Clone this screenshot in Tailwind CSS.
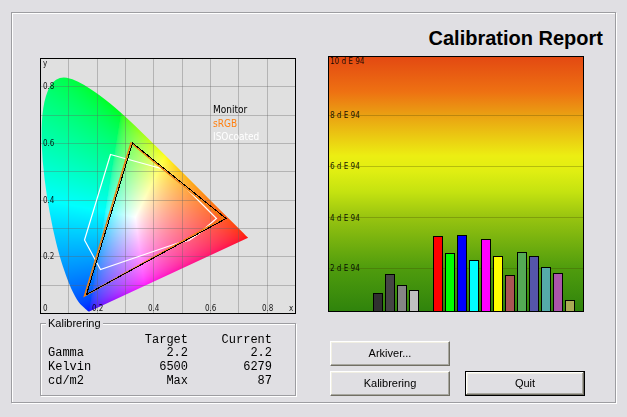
<!DOCTYPE html>
<html lang="da">
<head>
<meta charset="utf-8">
<meta name="viewport" content="width=device-width, initial-scale=1">
<title>Calibration Report</title>
<script src="https://cdn.jsdelivr.net/npm/@tailwindcss/browser@4"></script>
</head>
<body class="min-h-screen bg-[#e0dfe3] pt-3 pr-[11px] pb-3 pl-[11px] font-['Liberation_Sans',Arial,sans-serif] text-[11px] text-black">
<main class="border border-[#9d9da1] pt-3 pb-[6px] shadow-[1px_1px_0_#fff,inset_1px_1px_0_#fff]">
  <h1 class="pr-3 text-right text-[20px] leading-[26px] font-bold">Calibration Report</h1>
  <div class="mt-[5px] grid grid-cols-2 gap-8 pr-[31px] pl-7">
    <section class="pt-[2px]">
      <div class="grid bg-[#e0e0e0]">
        <canvas id="gamut" width="256" height="256" class="col-start-1 row-start-1 w-full"></canvas>
        <svg viewBox="0 0 256 256" class="col-start-1 row-start-1 w-full font-['DejaVu_Sans_Condensed','DejaVu_Sans',Tahoma,sans-serif]" role="img" aria-label="Chromaticity diagram">
          <g stroke="#606060" stroke-opacity=".35">
            <path d="M28.500 1V255M57.500 1V255M85.500 1V255M113.500 1V255M142.500 1V255M170.500 1V255M198.500 1V255M227.500 1V255"/>
            <path d="M1 28.500H255M1 57.500H255M1 85.500H255M1 113.500H255M1 142.500H255M1 170.500H255M1 198.500H255M1 227.500H255"/>
          </g>
          <g fill="none">
            <path stroke="#fff" stroke-width="1.200" d="M70.500 96.500L123 111L147 131L176.500 160.500L159 175.500L149 182.500L138 185L60.500 211.500L44.500 182Z"/>
            <path stroke="#f08010" stroke-width="1.500" d="M91 85L44.500 238L183 160.500Z"/>
            <path stroke="#000" stroke-width="1" shape-rendering="crispEdges" d="M92.500 85L46.500 236.500L186 160.500Z"/>
          </g>
          <g font-size="8" fill="#000" fill-opacity=".9">
            <text x="3" y="8">y</text><text x="3" y="31">0.8</text><text x="3" y="88">0.6</text><text x="3" y="145">0.4</text><text x="3" y="201">0.2</text>
            <text x="3" y="253">0</text><text x="52" y="253">0.2</text><text x="108" y="253">0.4</text><text x="165" y="253">0.6</text><text x="222" y="253">0.8</text><text x="249" y="253">x</text>
          </g>
          <g font-size="10">
            <text x="173" y="55">Monitor</text><text x="173" y="69" fill="#ff8010">sRGB</text><text x="173" y="82" fill="#fff">ISOcoated</text>
          </g>
          <rect x=".5" y=".5" width="255" height="255" fill="none" stroke="#000"/>
        </svg>
      </div>
      <fieldset class="mt-[2px] border border-[#9d9da1] px-[7px] pb-[7px] shadow-[1px_1px_0_#fff,inset_1px_1px_0_#fff]">
        <legend class="-ml-[2px] bg-[#e0dfe3] px-[2px] leading-[14px]">Kalibrering</legend>
        <table class="w-full table-fixed text-right font-['Liberation_Mono','Courier_New',monospace] text-[12px] leading-[14px]">
          <thead><tr><td class="w-[56px]"></td><th scope="col" class="pt-1 pr-2 leading-[12px] font-normal">Target</th><th scope="col" class="pt-1 pr-4 leading-[12px] font-normal">Current</th></tr></thead>
          <tbody>
            <tr><th scope="row" class="text-left font-normal">Gamma</th><td class="pr-2">2.2</td><td class="pr-4">2.2</td></tr>
            <tr><th scope="row" class="text-left font-normal">Kelvin</th><td class="pr-2">6500</td><td class="pr-4">6279</td></tr>
            <tr><th scope="row" class="text-left font-normal">cd/m2</th><td class="pr-2">Max</td><td class="pr-4">87</td></tr>
          </tbody>
        </table>
      </fieldset>
    </section>
    <section>
      <svg viewBox="0 0 256 256" class="block w-full font-['DejaVu_Sans_Condensed','DejaVu_Sans',Tahoma,sans-serif]" role="img" aria-label="Delta E 94 per patch">
        <defs><linearGradient id="scale" x1="0" y1="0" x2="0" y2="1">
          <stop offset="0" stop-color="#e34812"/><stop offset=".14" stop-color="#ee7112"/><stop offset=".23" stop-color="#eaa012"/><stop offset=".32" stop-color="#ebcc12"/><stop offset=".39" stop-color="#ecee12"/><stop offset=".45" stop-color="#e0ee12"/><stop offset=".53" stop-color="#c5e310"/><stop offset=".63" stop-color="#98c410"/><stop offset=".83" stop-color="#4f9c0d"/><stop offset="1" stop-color="#2f830c"/>
        </linearGradient></defs>
        <rect width="256" height="256" fill="url(#scale)"/>
        <path stroke="#404000" stroke-opacity=".28" d="M1 59.500H255M1 110.500H255M1 161.500H255M1 212.500H255"/>
        <g font-size="8" fill="#000" fill-opacity=".9">
          <text x="2" y="8">10 d E 94</text><text x="2" y="62">8 d E 94</text><text x="2" y="113">6 d E 94</text><text x="2" y="165">4 d E 94</text><text x="2" y="215">2 d E 94</text>
        </g>
        <g stroke="#000">
          <rect x="45.500" y="237.500" width="9" height="18" fill="#303030"/>
          <rect x="57.500" y="218.500" width="9" height="37" fill="#454545"/>
          <rect x="69.500" y="229.500" width="9" height="26" fill="#858585"/>
          <rect x="81.500" y="234.500" width="9" height="21" fill="#c0c0c0"/>
          <rect x="105.500" y="180.500" width="9" height="75" fill="#f00"/>
          <rect x="117.500" y="197.500" width="9" height="58" fill="#0f0"/>
          <rect x="129.500" y="179.500" width="9" height="76" fill="#00f"/>
          <rect x="141.500" y="204.500" width="9" height="51" fill="#0ff"/>
          <rect x="153.500" y="183.500" width="9" height="72" fill="#f0f"/>
          <rect x="165.500" y="200.500" width="9" height="55" fill="#ff0"/>
          <rect x="177.500" y="219.500" width="9" height="36" fill="#aa5555"/>
          <rect x="189.500" y="196.500" width="9" height="59" fill="#55aa55"/>
          <rect x="201.500" y="200.500" width="9" height="55" fill="#5555aa"/>
          <rect x="213.500" y="211.500" width="9" height="44" fill="#55aaaa"/>
          <rect x="225.500" y="217.500" width="9" height="38" fill="#aa55aa"/>
          <rect x="237.500" y="244.500" width="9" height="11" fill="#aaaa55"/>
          <rect x=".5" y=".5" width="255" height="255" fill="none"/>
        </g>
      </svg>
      <div class="mt-[29px] -mr-px ml-[2px] grid grid-cols-2 gap-x-[15px] gap-y-[5px]">
        <button type="button" class="h-[25px] border border-t-white border-r-[#716f64] border-b-[#716f64] border-l-white shadow-[inset_-1px_-1px_0_#a8a7a0,inset_1px_1px_0_#f1efe2]">Arkiver...</button>
        <button type="button" class="col-start-1 h-[25px] border border-t-white border-r-[#716f64] border-b-[#716f64] border-l-white shadow-[inset_-1px_-1px_0_#a8a7a0,inset_1px_1px_0_#f1efe2]">Kalibrering</button>
        <button type="button" class="h-[25px] border border-black shadow-[inset_-1px_-1px_0_#716f64,inset_1px_1px_0_#fff,inset_-2px_-2px_0_#a8a7a0,inset_2px_2px_0_#f1efe2]">Quit</button>
      </div>
    </section>
  </div>
</main>
<script>
// Spectral locus (CIE 1931 x, y), violet to red.
const locus = [[.1741,.005],[.1714,.0051],[.1689,.0069],[.1644,.0109],[.1566,.0177],[.144,.0297],[.1355,.0399],[.1241,.0578],[.1096,.0868],[.0913,.1327],[.0687,.2007],[.0454,.295],[.0235,.4127],[.0082,.5384],[.0039,.6548],[.0139,.7502],[.0389,.812],[.0743,.8338],[.1142,.8262],[.1547,.8059],[.1929,.7816],[.2296,.7543],[.2658,.7243],[.3016,.6923],[.3373,.6589],[.3731,.6245],[.4441,.5547],[.5125,.4866],[.5752,.4242],[.627,.3725],[.6658,.334],[.6915,.3083],[.719,.2809],[.7347,.2653]];
const R = [.735,.265], G = [.285,.715], B = [.17,.005], W = [.335,.34], S = 283.3;
const cross = (p, q, r) => (q[0]-p[0])*(r[1]-p[1]) - (q[1]-p[1])*(r[0]-p[0]);
// Barycentric weights of a point, scaled so that the white point gives equal channels.
const weights = p => [cross(G,B,p), cross(B,R,p), cross(R,G,p)];
const white = weights(W);
const ctx = document.getElementById('gamut').getContext('2d');
const img = ctx.createImageData(256, 256);
for (let j = 0; j < 256; j++) for (let i = 0; i < 256; i++) {
  const c = weights([i/S, (255-j)/S]).map((v, k) => Math.max(0, v/white[k]));
  const m = Math.max(...c), o = (j*256+i)*4;
  c.forEach((v, k) => img.data[o+k] = 255*Math.pow(v/m, 1/2.1));
  img.data[o+3] = 255;
}
ctx.putImageData(img, 0, 0);
ctx.globalCompositeOperation = 'destination-in';
ctx.beginPath();
const pts = locus.map(([x, y]) => [x*S, 255-y*S]);
ctx.moveTo(...pts[0]);
for (let k = 1; k < pts.length-1; k++)
  ctx.quadraticCurveTo(...pts[k], (pts[k][0]+pts[k+1][0])/2, (pts[k][1]+pts[k+1][1])/2);
ctx.lineTo(...pts[pts.length-1]);
ctx.closePath();
ctx.fill();
</script>
</body>
</html>
